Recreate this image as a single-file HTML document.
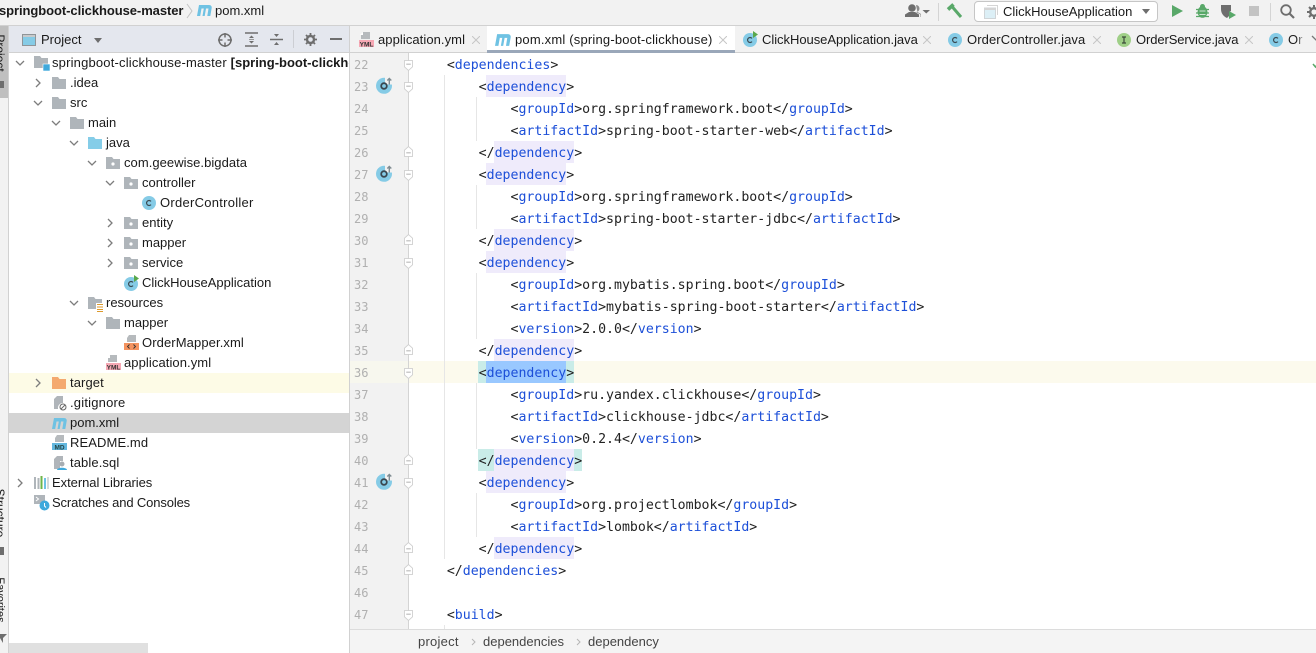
<!DOCTYPE html>
<html><head><meta charset="utf-8"><style>
*{box-sizing:border-box}
html,body{margin:0;padding:0;width:1316px;height:653px;overflow:hidden;background:#fff}
body{position:relative;font:13px/20px "Liberation Sans","Noto Sans CJK SC",sans-serif;color:#1a1a1a}
.a{position:absolute}
.t{position:absolute;white-space:pre;height:20px;line-height:20px}
svg.i{position:absolute;overflow:visible}
.l{position:absolute;left:415px;margin-top:2px;height:22px;white-space:pre;font:13.23px/22px "DejaVu Sans Mono","Liberation Mono",monospace;color:#222}
.l b{font-weight:normal;color:#1c4fd8}
.n{position:absolute;left:354px;margin-top:1px;height:22px;font:12px/22px "DejaVu Sans Mono",monospace;color:#b0b0b0}
.h{position:absolute;height:22px;background:#efebfb}
.g{position:absolute;width:1px;background:#e6e6e6}
.x{position:absolute;top:36px;width:8px;height:8px}
</style></head><body>
<svg width="0" height="0" style="position:absolute"><defs>
<symbol id="folder" viewBox="0 0 14 12"><path d="M0 0H6L7.5 2H14V12H0Z" fill="#afb5ba"/></symbol>
<symbol id="pkg" viewBox="0 0 14 12"><path d="M0 0H6L7.5 2H14V12H0Z" fill="#afb5ba"/><circle cx="7" cy="7" r="1.6" fill="#fff"/></symbol>
<symbol id="jfolder" viewBox="0 0 14 12"><path d="M0 0H6L7.5 2H14V12H0Z" fill="#85cde8"/></symbol>
<symbol id="ofolder" viewBox="0 0 14 12"><path d="M0 0H6L7.5 2H14V12H0Z" fill="#f4a96f"/></symbol>
<symbol id="cls" viewBox="0 0 14 14"><circle cx="7" cy="7" r="7" fill="#85cbe6"/><path d="M9 5.400A2.500 2.500 0 1 0 9 8.600" fill="none" stroke="#3b4a52" stroke-width="1.200"/></symbol>
<symbol id="run" viewBox="0 0 16 16"><circle cx="7" cy="9" r="7" fill="#85cbe6"/><path d="M9 7.400A2.500 2.500 0 1 0 9 10.600" fill="none" stroke="#3b4a52" stroke-width="1.200"/><path d="M10 0L15 3.500L10 7Z" fill="#59a84b"/></symbol>
<symbol id="m" viewBox="0 0 15 12"><path d="M0 12L2 1H12C14 1 15 2.500 14.700 4L13.300 12H10.300L11.500 4.500H9L7.700 12H5.500L6.800 4.500H4.500L3.200 12Z" fill="#6fc2e3"/></symbol>
<symbol id="yml" viewBox="0 0 15 16"><path d="M4 0H11V7H2V3Z" fill="#b6babd"/><path d="M4 0V3H1" fill="#fff"/><rect y="8" width="15" height="7" fill="#f6a8b4"/><text x="7.5" y="14.3" font-family="Liberation Sans" font-size="6.5" font-weight="bold" text-anchor="middle" fill="#333">YML</text></symbol>
<symbol id="xml" viewBox="0 0 15 16"><path d="M5 0H12V7H3V3Z" fill="#b6babd"/><rect y="8" width="15" height="7" fill="#f4935f"/><path d="M5.5 9.5L3.5 11.5L5.5 13.5M9.5 9.5L11.5 11.5L9.5 13.5" fill="none" stroke="#333" stroke-width=".9"/></symbol>
<symbol id="md" viewBox="0 0 15 16"><path d="M5 0H12V7H3V3Z" fill="#b6babd"/><rect y="8" width="15" height="7" fill="#63b7de"/><text x="7.5" y="14.3" font-family="Liberation Sans" font-size="6.5" font-weight="bold" text-anchor="middle" fill="#244">MD</text></symbol>
<symbol id="chr" viewBox="0 0 10 10"><path d="M3 1L7 5L3 9" fill="none" stroke="#7d7d7d" stroke-width="1.3"/></symbol>
<symbol id="chd" viewBox="0 0 10 10"><path d="M1 3L5 7L9 3" fill="none" stroke="#7d7d7d" stroke-width="1.3"/></symbol>
<symbol id="cx" viewBox="0 0 8 8"><path d="M0 0L8 8M8 0L0 8" stroke="#c6c6c6" stroke-width="1"/></symbol>
<symbol id="fu" viewBox="0 0 10 12"><path d="M.5 .5H9.500V7.500L5 11.500L.5 7.500Z" fill="#fff" stroke="#cfcfcf"/><path d="M2.500 4.500H7.500" stroke="#a8a8a8"/></symbol>
<symbol id="fd" viewBox="0 0 10 12"><path d="M.5 11.500H9.500V4.500L5 .5L.5 4.500Z" fill="#fff" stroke="#cfcfcf"/><path d="M2.500 7.500H7.500" stroke="#a8a8a8"/></symbol>
<symbol id="ov" viewBox="0 0 17 17"><circle cx="8" cy="8.800" r="8" fill="#85cbe6"/><rect x="9" y="0" width="8" height="7.500" fill="#f2f2f2"/><circle cx="8" cy="9" r="2.800" fill="none" stroke="#3a4750" stroke-width="1.800"/><path d="M13.300 7.500V1.500M11.300 3.500L13.300 1.500L15.300 3.500" fill="none" stroke="#7f8b91" stroke-width="1.400"/></symbol>
</defs></svg>

<!-- top bar -->
<div class="a" style="left:0;top:0;width:1316px;height:26px;background:#f2f2f2;border-bottom:1px solid #d1d1d1"></div>
<div class="t" style="left:-1px;top:1px;font-weight:bold;letter-spacing:-.07px">springboot-clickhouse-master</div>
<svg class="i" style="left:186px;top:3px" width="7" height="16"><path d="M1 1L6 8L1 15" fill="none" stroke="#c4c4c4"/></svg>
<svg class="i" style="left:197px;top:4px" width="15" height="12"><use href="#m"/></svg>
<div class="t" style="left:215px;top:1px">pom.xml</div>

<svg class="i" style="left:905px;top:4px" width="26" height="14"><circle cx="7" cy="4" r="3.800" fill="#6e6e6e"/><path d="M0 13V10.500L4 8H10L14 10.500V13Z" fill="#6e6e6e"/><path d="M11 1A3.500 3.500 0 0 1 11 8L15.500 10.500V13H16V10L12.500 8Z" fill="#8c8c8c"/><path d="M17.500 6H25L21.250 9.500Z" fill="#6e6e6e"/></svg>
<div class="a" style="left:938px;top:3px;width:1px;height:18px;background:#d4d4d4"></div>
<svg class="i" style="left:947px;top:3px" width="16" height="16"><path d="M1 6.500L6.500 1.500" stroke="#59a869" stroke-width="3.600"/><path d="M5 3.500L14 14" stroke="#59a869" stroke-width="3"/></svg>
<div class="a" style="left:974px;top:1px;width:184px;height:21px;background:#fff;border:1px solid #c6c6c6;border-radius:4px"></div>
<svg class="i" style="left:984px;top:5px" width="14" height="14"><path d="M3 .5H13.500V10" fill="none" stroke="#d5d5d5"/><rect x=".5" y="3" width="11" height="10.500" fill="#dceff6" stroke="#d0d5d8"/><rect x=".5" y="3" width="11" height="2" fill="#d5d5d5"/></svg>
<div class="t" style="left:1003px;top:2px">ClickHouseApplication</div>
<svg class="i" style="left:1142px;top:9px" width="8" height="5"><path d="M0 0H8L4 5Z" fill="#6e6e6e"/></svg>
<svg class="i" style="left:1172px;top:5px" width="11" height="12"><path d="M0 0L11 6L0 12Z" fill="#59a869"/></svg>
<svg class="i" style="left:1196px;top:4px" width="13" height="14"><ellipse cx="6.500" cy="8" rx="5" ry="5.800" fill="#59a869"/><circle cx="6.500" cy="2.500" r="2.500" fill="#59a869"/><path d="M0 5.500H13M0 9H13M0 12.500H13" stroke="#59a869" stroke-width="1.200"/><path d="M3.500 7H9.500M3.500 10.500H9.500" stroke="#cde5d2"/></svg>
<svg class="i" style="left:1221px;top:4px" width="16" height="15"><path d="M0 1H10V7L8 8V12L6 14C2 12 0 9 0 5Z" fill="#6e6e6e"/><path d="M8 7L15 11L8 15Z" fill="#59a869"/></svg>
<div class="a" style="left:1249px;top:6px;width:10px;height:10px;background:#c3c3c3"></div>
<div class="a" style="left:1270px;top:3px;width:1px;height:18px;background:#d4d4d4"></div>
<svg class="i" style="left:1280px;top:4px" width="15" height="15"><circle cx="6" cy="6" r="4.800" fill="none" stroke="#6e6e6e" stroke-width="1.800"/><path d="M9.500 9.500L14 14" stroke="#6e6e6e" stroke-width="2.200"/></svg>
<svg class="i" style="left:1307px;top:5px" width="14" height="14"><circle cx="7" cy="7" r="3.800" fill="none" stroke="#6e6e6e" stroke-width="2.400"/><path d="M7 0V3M7 11V14M0 7H3M11 7H14M2 2L4 4M10 10L12 12M12 2L10 4M4 10L2 12" stroke="#6e6e6e" stroke-width="2"/></svg>

<!-- left strip -->
<div class="a" style="left:0;top:26px;width:9px;height:627px;background:#f2f2f2;border-right:1px solid #d1d1d1;overflow:hidden">
<div class="a" style="left:0;top:0;width:8px;height:72px;background:#bfbfbf"></div>
<div class="a" style="left:-20px;top:17px;width:40px;height:20px;line-height:20px;transform:rotate(90deg);white-space:pre;font-size:12px;text-align:center">Project</div>
<div class="a" style="left:0;top:55px;width:4px;height:7px;background:#6e6e6e"></div>
<div class="a" style="left:-28px;top:477px;width:56px;height:20px;line-height:20px;transform:rotate(90deg);white-space:pre;font-size:12px;text-align:center">Structure</div>
<div class="a" style="left:0;top:521px;width:4px;height:8px;background:#6e6e6e"></div>
<div class="a" style="left:-28px;top:564px;width:56px;height:20px;line-height:20px;transform:rotate(90deg);white-space:pre;font-size:11px;text-align:center">Favorites</div>
<svg class="i" style="left:-3px;top:607px" width="10" height="10"><path d="M0 1H10L6 5V10L3 5Z" fill="#6e6e6e"/></svg>
</div>

<!-- project panel -->
<div class="a" style="left:9px;top:26px;width:340px;height:27px;background:#e4e7ee;border-bottom:1px solid #d1d1d1"></div>
<svg class="i" style="left:22px;top:34px" width="14" height="12"><rect x=".5" y=".5" width="13" height="11" fill="#85cbe6" stroke="#8f9498"/><rect x="1" y="1" width="12" height="2" fill="#c7cacc"/></svg>
<div class="t" style="left:41px;top:30px">Project</div>
<svg class="i" style="left:94px;top:38px" width="8" height="5"><path d="M0 0H8L4 5Z" fill="#6e6e6e"/></svg>
<svg class="i" style="left:218px;top:33px" width="14" height="14"><circle cx="7" cy="7" r="6" fill="none" stroke="#6e6e6e" stroke-width="1.500"/><path d="M7 0V4.500M7 9.500V14M0 7H4.500M9.500 7H14" stroke="#6e6e6e" stroke-width="1.500"/></svg>
<svg class="i" style="left:245px;top:32px" width="14" height="15"><path d="M0 1H13M0 14H13" stroke="#6e6e6e" stroke-width="1.500"/><path d="M4 6L6.500 3.500L9 6ZM4 9L6.500 11.500L9 9Z" fill="#6e6e6e"/><path d="M4 7.500H9" stroke="#999"/></svg>
<svg class="i" style="left:270px;top:32px" width="14" height="15"><path d="M0 7.500H13" stroke="#6e6e6e" stroke-width="1.500"/><path d="M4 2L6.500 5L9 2ZM4 13L6.500 10L9 13Z" fill="#6e6e6e"/></svg>
<div class="a" style="left:293px;top:30px;width:1px;height:18px;background:#ccced3"></div>
<svg class="i" style="left:304px;top:33px" width="13" height="13"><circle cx="6.500" cy="6.500" r="3.500" fill="none" stroke="#6e6e6e" stroke-width="2.400"/><path d="M6.500 0V3M6.500 10V13M0 6.500H3M10 6.500H13M2 2L4 4M9 9L11 11M11 2L9 4M4 9L2 11" stroke="#6e6e6e" stroke-width="1.800"/></svg>
<div class="a" style="left:330px;top:38px;width:12px;height:2px;background:#6e6e6e"></div>

<!-- tree backgrounds -->
<div class="a" style="left:9px;top:373px;width:340px;height:20px;background:#fdfbe6"></div>
<div class="a" style="left:9px;top:413px;width:340px;height:20px;background:#d4d4d4"></div>
<div class="a" style="left:9px;top:643px;width:139px;height:10px;background:#e0e0e0"></div>
<div class="a" style="left:349px;top:26px;width:1px;height:627px;background:#d1d1d1"></div>

<!-- tree -->
<svg class="i" style="left:15px;top:58px" width="10" height="10"><use href="#chd"/></svg>
<svg class="i" style="left:34px;top:56px" width="16" height="15"><path d="M0 0H6L7.500 2H14V12H0Z" fill="#afb5ba"/><rect x="9" y="8" width="7" height="7" fill="#3fa9dc" stroke="#fff" stroke-width=".6"/></svg>
<div class="t" style="left:52px;top:53px;width:297px;overflow:hidden"><span style="letter-spacing:.18px">springboot-clickhouse-master </span><b>[spring-boot-clickhouse]</b></div>

<svg class="i" style="left:33px;top:78px" width="10" height="10"><use href="#chr"/></svg>
<svg class="i" style="left:52px;top:77px" width="14" height="12"><use href="#folder"/></svg>
<div class="t" style="left:70px;top:73px">.idea</div>

<svg class="i" style="left:33px;top:98px" width="10" height="10"><use href="#chd"/></svg>
<svg class="i" style="left:52px;top:97px" width="14" height="12"><use href="#folder"/></svg>
<div class="t" style="left:70px;top:93px">src</div>

<svg class="i" style="left:51px;top:118px" width="10" height="10"><use href="#chd"/></svg>
<svg class="i" style="left:70px;top:117px" width="14" height="12"><use href="#folder"/></svg>
<div class="t" style="left:88px;top:113px">main</div>

<svg class="i" style="left:69px;top:138px" width="10" height="10"><use href="#chd"/></svg>
<svg class="i" style="left:88px;top:137px" width="14" height="12"><use href="#jfolder"/></svg>
<div class="t" style="left:106px;top:133px">java</div>

<svg class="i" style="left:87px;top:158px" width="10" height="10"><use href="#chd"/></svg>
<svg class="i" style="left:106px;top:157px" width="14" height="12"><use href="#pkg"/></svg>
<div class="t" style="left:124px;top:153px;letter-spacing:.05px">com.geewise.bigdata</div>

<svg class="i" style="left:105px;top:178px" width="10" height="10"><use href="#chd"/></svg>
<svg class="i" style="left:124px;top:177px" width="14" height="12"><use href="#pkg"/></svg>
<div class="t" style="left:142px;top:173px">controller</div>

<svg class="i" style="left:142px;top:196px" width="14" height="14"><use href="#cls"/></svg>
<div class="t" style="left:160px;top:193px;letter-spacing:.27px">OrderController</div>

<svg class="i" style="left:105px;top:218px" width="10" height="10"><use href="#chr"/></svg>
<svg class="i" style="left:124px;top:217px" width="14" height="12"><use href="#pkg"/></svg>
<div class="t" style="left:142px;top:213px">entity</div>

<svg class="i" style="left:105px;top:238px" width="10" height="10"><use href="#chr"/></svg>
<svg class="i" style="left:124px;top:237px" width="14" height="12"><use href="#pkg"/></svg>
<div class="t" style="left:142px;top:233px">mapper</div>

<svg class="i" style="left:105px;top:258px" width="10" height="10"><use href="#chr"/></svg>
<svg class="i" style="left:124px;top:257px" width="14" height="12"><use href="#pkg"/></svg>
<div class="t" style="left:142px;top:253px">service</div>

<svg class="i" style="left:124px;top:275px" width="16" height="16"><use href="#run"/></svg>
<div class="t" style="left:142px;top:273px">ClickHouseApplication</div>

<svg class="i" style="left:69px;top:298px" width="10" height="10"><use href="#chd"/></svg>
<svg class="i" style="left:88px;top:297px" width="16" height="15"><path d="M0 0H6L7.500 2H14V12H0Z" fill="#afb5ba"/><rect x="8" y="6" width="8" height="9" fill="#fff"/><path d="M9 7.500H15M9 10H15M9 12.500H15M9 14.500H15" stroke="#dd9a2c"/></svg>
<div class="t" style="left:106px;top:293px">resources</div>

<svg class="i" style="left:87px;top:318px" width="10" height="10"><use href="#chd"/></svg>
<svg class="i" style="left:106px;top:317px" width="14" height="12"><use href="#folder"/></svg>
<div class="t" style="left:124px;top:313px">mapper</div>

<svg class="i" style="left:124px;top:335px" width="15" height="16"><use href="#xml"/></svg>
<div class="t" style="left:142px;top:333px;letter-spacing:.1px">OrderMapper.xml</div>

<svg class="i" style="left:106px;top:355px" width="15" height="16"><use href="#yml"/></svg>
<div class="t" style="left:124px;top:353px;letter-spacing:.08px">application.yml</div>

<svg class="i" style="left:33px;top:378px" width="10" height="10"><use href="#chr"/></svg>
<svg class="i" style="left:52px;top:377px" width="14" height="12"><use href="#ofolder"/></svg>
<div class="t" style="left:70px;top:373px;letter-spacing:.1px">target</div>

<svg class="i" style="left:54px;top:396px" width="14" height="16"><path d="M3 0H9V7H8A5 5 0 0 0 4 13H0V3Z" fill="#b0b5ba"/><circle cx="9" cy="11" r="3" fill="#fff" stroke="#666"/><path d="M7 13L11 9" stroke="#666"/></svg>
<div class="t" style="left:70px;top:393px;letter-spacing:.2px">.gitignore</div>

<svg class="i" style="left:52px;top:417px" width="15" height="12"><use href="#m"/></svg>
<div class="t" style="left:70px;top:413px">pom.xml</div>

<svg class="i" style="left:52px;top:435px" width="15" height="16"><use href="#md"/></svg>
<div class="t" style="left:70px;top:433px;letter-spacing:.1px">README.md</div>

<svg class="i" style="left:54px;top:456px" width="14" height="15"><path d="M3 0H9V5H6V13H0V3Z" fill="#b0b5ba"/><circle cx="8" cy="8" r="2.500" fill="#a7adb2"/><path d="M3 14C3 11 13 11 13 14Z" fill="#3fa9dc"/></svg>
<div class="t" style="left:70px;top:453px;letter-spacing:.1px">table.sql</div>

<svg class="i" style="left:15px;top:478px" width="10" height="10"><use href="#chr"/></svg>
<svg class="i" style="left:34px;top:476px" width="14" height="13"><path d="M1 1V13" stroke="#afb5ba" stroke-width="2"/><path d="M4.500 2V13" stroke="#afb5ba" stroke-width="2"/><path d="M7.500 0V13" stroke="#6fb54a" stroke-width="2"/><path d="M11 2V13" stroke="#6fc2e3" stroke-width="2"/><path d="M14 1V13" stroke="#afb5ba" stroke-width="1"/></svg>
<div class="t" style="left:52px;top:473px;letter-spacing:-.05px">External Libraries</div>

<svg class="i" style="left:34px;top:495px" width="16" height="16"><rect x="0" y="0" width="11" height="9" fill="#afb5ba"/><path d="M2 2L4.500 4L2 6" fill="none" stroke="#fff"/><circle cx="10.500" cy="10.500" r="5" fill="#3fa9dc"/><path d="M10.500 8V11L12 12.500" fill="none" stroke="#fff"/></svg>
<div class="t" style="left:52px;top:493px;letter-spacing:-.13px">Scratches and Consoles</div>

<!-- tabs -->
<div class="a" style="left:350px;top:26px;width:966px;height:27px;background:#f2f2f2;border-bottom:1px solid #d1d1d1"></div>
<div class="a" style="left:487px;top:26px;width:248px;height:27px;background:#fff;border-bottom:3px solid #9aa7b9"></div>
<svg class="i" style="left:359px;top:32px" width="15" height="16"><use href="#yml"/></svg>
<div class="t" style="left:378px;top:30px;letter-spacing:.07px">application.yml</div>
<svg class="x" style="left:472px"><use href="#cx"/></svg>
<svg class="i" style="left:495px;top:33px" width="16" height="13"><use href="#m"/></svg>
<div class="t" style="left:515px;top:30px;letter-spacing:.19px">pom.xml (spring-boot-clickhouse)</div>
<svg class="x" style="left:719px"><use href="#cx"/></svg>
<svg class="i" style="left:743px;top:31px" width="16" height="16"><use href="#run"/></svg>
<div class="t" style="left:762px;top:30px;letter-spacing:-.04px">ClickHouseApplication.java</div>
<svg class="x" style="left:923px"><use href="#cx"/></svg>
<svg class="i" style="left:948px;top:33px" width="14" height="14"><use href="#cls"/></svg>
<div class="t" style="left:967px;top:30px;letter-spacing:.1px">OrderController.java</div>
<svg class="x" style="left:1093px"><use href="#cx"/></svg>
<svg class="i" style="left:1117px;top:33px" width="14" height="14"><circle cx="7" cy="7" r="7" fill="#9fcf87"/><path d="M5 4H9M7 4V10M5 10H9" stroke="#3b4a3a" stroke-width="1.200" fill="none"/></svg>
<div class="t" style="left:1136px;top:30px;letter-spacing:-.1px">OrderService.java</div>
<svg class="x" style="left:1245px"><use href="#cx"/></svg>
<svg class="i" style="left:1269px;top:33px" width="14" height="14"><use href="#cls"/></svg>
<div class="t" style="left:1288px;top:30px">Or</div>
<div class="a" style="left:1296px;top:27px;width:10px;height:24px;background:linear-gradient(90deg,rgba(242,242,242,0),#f2f2f2)"></div>
<svg class="i" style="left:1312px;top:36px" width="8" height="6"><path d="M0 0L4 4L8 0" fill="none" stroke="#777" stroke-width="1.300"/></svg>

<!-- gutter -->
<div class="a" style="left:350px;top:53px;width:58px;height:576px;background:#f2f2f2"></div>
<div class="a" style="left:350px;top:361px;width:58px;height:22px;background:#f7f7ee"></div>
<div class="a" style="left:408px;top:361px;width:908px;height:22px;background:#fcfaed"></div>
<div class="a" style="left:408px;top:53px;width:1px;height:576px;background:#d4d4d4"></div>

<!-- guides -->
<div class="g" style="left:444px;top:75px;height:484px"></div>
<div class="g" style="left:444px;top:625px;height:4px"></div>
<div class="g" style="left:476px;top:97px;height:44px"></div>
<div class="g" style="left:476px;top:185px;height:44px"></div>
<div class="g" style="left:476px;top:273px;height:66px"></div>
<div class="g" style="left:476px;top:383px;height:66px"></div>
<div class="g" style="left:476px;top:493px;height:44px"></div>

<!-- highlights -->
<div class="h" style="left:486px;top:75px;width:80px"></div>
<div class="h" style="left:494px;top:141px;width:80px"></div>
<div class="h" style="left:486px;top:163px;width:80px"></div>
<div class="h" style="left:494px;top:229px;width:80px"></div>
<div class="h" style="left:486px;top:251px;width:80px"></div>
<div class="h" style="left:494px;top:339px;width:80px"></div>
<div class="h" style="left:478px;top:361px;width:96px;background:#c9ece8"></div>
<div class="h" style="left:486px;top:361px;width:80px;background:#99c8ff"></div>
<div class="h" style="left:478px;top:449px;width:104px;background:#c9ece8"></div>
<div class="h" style="left:494px;top:449px;width:80px;background:#efebfb"></div>
<div class="h" style="left:486px;top:471px;width:80px"></div>
<div class="h" style="left:494px;top:537px;width:80px"></div>

<!-- line numbers -->
<div class="n" style="top:53px">22</div><div class="n" style="top:75px">23</div><div class="n" style="top:97px">24</div><div class="n" style="top:119px">25</div><div class="n" style="top:141px">26</div><div class="n" style="top:163px">27</div><div class="n" style="top:185px">28</div><div class="n" style="top:207px">29</div><div class="n" style="top:229px">30</div><div class="n" style="top:251px">31</div><div class="n" style="top:273px">32</div><div class="n" style="top:295px">33</div><div class="n" style="top:317px">34</div><div class="n" style="top:339px">35</div><div class="n" style="top:361px">36</div><div class="n" style="top:383px">37</div><div class="n" style="top:405px">38</div><div class="n" style="top:427px">39</div><div class="n" style="top:449px">40</div><div class="n" style="top:471px">41</div><div class="n" style="top:493px">42</div><div class="n" style="top:515px">43</div><div class="n" style="top:537px">44</div><div class="n" style="top:559px">45</div><div class="n" style="top:581px">46</div><div class="n" style="top:603px">47</div>

<!-- gutter icons -->
<svg class="i" style="left:376px;top:77px" width="17" height="17"><use href="#ov"/></svg>
<svg class="i" style="left:376px;top:165px" width="17" height="17"><use href="#ov"/></svg>
<svg class="i" style="left:376px;top:473px" width="17" height="17"><use href="#ov"/></svg>

<!-- folds -->
<svg class="i" style="left:404px;top:60px" width="9" height="11"><use href="#fu"/></svg>
<svg class="i" style="left:404px;top:82px" width="9" height="11"><use href="#fu"/></svg>
<svg class="i" style="left:404px;top:146px" width="9" height="11"><use href="#fd"/></svg>
<svg class="i" style="left:404px;top:170px" width="9" height="11"><use href="#fu"/></svg>
<svg class="i" style="left:404px;top:234px" width="9" height="11"><use href="#fd"/></svg>
<svg class="i" style="left:404px;top:258px" width="9" height="11"><use href="#fu"/></svg>
<svg class="i" style="left:404px;top:344px" width="9" height="11"><use href="#fd"/></svg>
<svg class="i" style="left:404px;top:368px" width="9" height="11"><use href="#fu"/></svg>
<svg class="i" style="left:404px;top:454px" width="9" height="11"><use href="#fd"/></svg>
<svg class="i" style="left:404px;top:478px" width="9" height="11"><use href="#fu"/></svg>
<svg class="i" style="left:404px;top:542px" width="9" height="11"><use href="#fd"/></svg>
<svg class="i" style="left:404px;top:564px" width="9" height="11"><use href="#fd"/></svg>
<svg class="i" style="left:404px;top:610px" width="9" height="11"><use href="#fu"/></svg>

<!-- code -->
<div class="l" style="top:53px">    &lt;<b>dependencies</b>&gt;</div>
<div class="l" style="top:75px">        &lt;<b>dependency</b>&gt;</div>
<div class="l" style="top:97px">            &lt;<b>groupId</b>&gt;org.springframework.boot&lt;/<b>groupId</b>&gt;</div>
<div class="l" style="top:119px">            &lt;<b>artifactId</b>&gt;spring-boot-starter-web&lt;/<b>artifactId</b>&gt;</div>
<div class="l" style="top:141px">        &lt;/<b>dependency</b>&gt;</div>
<div class="l" style="top:163px">        &lt;<b>dependency</b>&gt;</div>
<div class="l" style="top:185px">            &lt;<b>groupId</b>&gt;org.springframework.boot&lt;/<b>groupId</b>&gt;</div>
<div class="l" style="top:207px">            &lt;<b>artifactId</b>&gt;spring-boot-starter-jdbc&lt;/<b>artifactId</b>&gt;</div>
<div class="l" style="top:229px">        &lt;/<b>dependency</b>&gt;</div>
<div class="l" style="top:251px">        &lt;<b>dependency</b>&gt;</div>
<div class="l" style="top:273px">            &lt;<b>groupId</b>&gt;org.mybatis.spring.boot&lt;/<b>groupId</b>&gt;</div>
<div class="l" style="top:295px">            &lt;<b>artifactId</b>&gt;mybatis-spring-boot-starter&lt;/<b>artifactId</b>&gt;</div>
<div class="l" style="top:317px">            &lt;<b>version</b>&gt;2.0.0&lt;/<b>version</b>&gt;</div>
<div class="l" style="top:339px">        &lt;/<b>dependency</b>&gt;</div>
<div class="l" style="top:361px">        &lt;<b>dependency</b>&gt;</div>
<div class="l" style="top:383px">            &lt;<b>groupId</b>&gt;ru.yandex.clickhouse&lt;/<b>groupId</b>&gt;</div>
<div class="l" style="top:405px">            &lt;<b>artifactId</b>&gt;clickhouse-jdbc&lt;/<b>artifactId</b>&gt;</div>
<div class="l" style="top:427px">            &lt;<b>version</b>&gt;0.2.4&lt;/<b>version</b>&gt;</div>
<div class="l" style="top:449px">        &lt;/<b>dependency</b>&gt;</div>
<div class="l" style="top:471px">        &lt;<b>dependency</b>&gt;</div>
<div class="l" style="top:493px">            &lt;<b>groupId</b>&gt;org.projectlombok&lt;/<b>groupId</b>&gt;</div>
<div class="l" style="top:515px">            &lt;<b>artifactId</b>&gt;lombok&lt;/<b>artifactId</b>&gt;</div>
<div class="l" style="top:537px">        &lt;/<b>dependency</b>&gt;</div>
<div class="l" style="top:559px">    &lt;/<b>dependencies</b>&gt;</div>
<div class="l" style="top:603px">    &lt;<b>build</b>&gt;</div>

<svg class="i" style="left:1313px;top:62px" width="6" height="6"><path d="M0 2L2.500 5L6 0" fill="none" stroke="#59a869" stroke-width="1.500"/></svg>

<!-- breadcrumbs -->
<div class="a" style="left:350px;top:629px;width:966px;height:24px;background:#f4f4f4;border-top:1px solid #dcdcdc"></div>
<div class="t" style="left:418px;top:632px;color:#444;letter-spacing:.25px">project</div>
<svg class="i" style="left:471px;top:638px" width="5" height="8"><path d="M1 1L4 4L1 7" fill="none" stroke="#b5b5b5"/></svg>
<div class="t" style="left:483px;top:632px;color:#444">dependencies</div>
<svg class="i" style="left:576px;top:638px" width="5" height="8"><path d="M1 1L4 4L1 7" fill="none" stroke="#b5b5b5"/></svg>
<div class="t" style="left:588px;top:632px;color:#444">dependency</div>
</body></html>
